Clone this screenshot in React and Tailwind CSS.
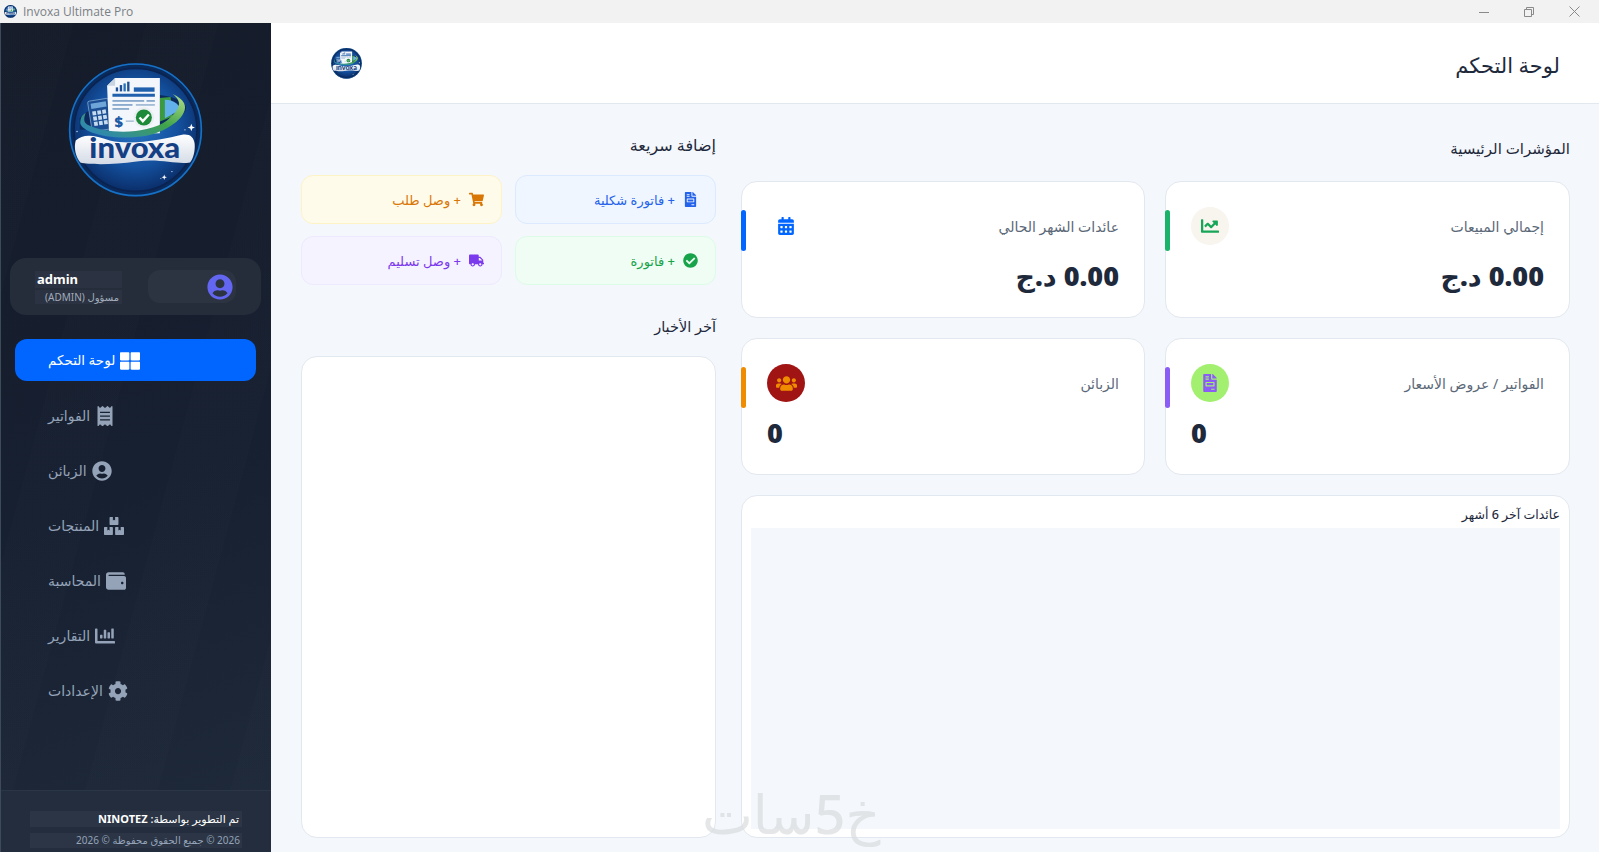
import React from "react";
import {
  FaThLarge, FaReceipt, FaUserCircle, FaBoxes, FaWallet, FaChartBar, FaCog,
  FaFileInvoice, FaShoppingCart, FaCheckCircle, FaTruck, FaChartLine, FaCalendarAlt, FaUsers,
} from "react-icons/fa";

function Logo({ size }) {
  return (
    <svg width={size} height={size} viewBox="55 40 404 404" className="block shrink-0">
      <defs>
        <radialGradient id="lg-bg" cx="50%" cy="45%" r="55%">
          <stop offset="0%" stopColor="#2a78c8" />
          <stop offset="65%" stopColor="#134f9c" />
          <stop offset="100%" stopColor="#0b2f6b" />
        </radialGradient>
        <linearGradient id="lg-green" x1="0" y1="1" x2="1" y2="0">
          <stop offset="0%" stopColor="#2a7fd0" />
          <stop offset="55%" stopColor="#3fa34a" />
          <stop offset="100%" stopColor="#b6e08a" />
        </linearGradient>
        <linearGradient id="lg-banner" x1="0" y1="0" x2="0" y2="1">
          <stop offset="0%" stopColor="#ffffff" />
          <stop offset="100%" stopColor="#d4dbe6" />
        </linearGradient>
      </defs>
      <circle cx="257" cy="240" r="200" fill="#0a2a5c" />
      <circle cx="257" cy="240" r="197" fill="none" stroke="#1670c4" strokeWidth="5" />
      <circle cx="257" cy="240" r="184" fill="url(#lg-bg)" stroke="#0a2350" strokeWidth="5" />
      <path d="M90 205 C160 130 350 110 405 165 C420 185 380 215 330 235 L90 240 Z" fill="#0c2a5e" />
      <g transform="rotate(-9 148 195)">
        <rect x="120" y="150" width="62" height="92" rx="5" fill="#1b4e93" stroke="#8fb4dc" strokeWidth="2" />
        <rect x="128" y="158" width="46" height="16" fill="#6fa6da" />
        {[0, 1, 2].map((r) =>
          [0, 1, 2].map((c) => (
            <rect key={`${r}-${c}`} x={129 + c * 15} y={182 + r * 16} width="11" height="12" fill="#c8dcf0" />
          ))
        )}
      </g>
      <path d="M330 145 L362 142 L368 200 L330 215 Z" fill="#3b9a40" />
      <path d="M345 150 C375 150 392 170 392 180 L345 205 Z" fill="#62b1ea" />
      <path d="M172 108 L196 85 L330 85 L330 250 L178 255 Z" fill="#f3f6fa" />
      <path d="M172 108 L196 108 L196 85 Z" fill="#c9d4e2" />
      <rect x="198" y="113" width="7" height="12" fill="#1d4f96" />
      <rect x="210" y="106" width="7" height="19" fill="#1d4f96" />
      <rect x="221" y="101" width="7" height="24" fill="#2a70b8" />
      <rect x="232" y="96" width="7" height="29" fill="#1d4f96" />
      <rect x="252" y="113" width="62" height="13" fill="#2160ad" />
      <rect x="188" y="132" width="127" height="9" fill="#2160ad" />
      <rect x="188" y="151" width="95" height="5" fill="#7fa3c8" />
      <rect x="290" y="151" width="25" height="5" fill="#7fa3c8" />
      <rect x="188" y="163" width="60" height="5" fill="#7fa3c8" />
      <rect x="258" y="163" width="57" height="5" fill="#9db7d2" />
      <rect x="188" y="175" width="50" height="5" fill="#7fa3c8" />
      <text x="194" y="232" fontFamily="'Open Sans', sans-serif" fontWeight="800" fontSize="44" fill="#1d5aa6">$</text>
      <rect x="228" y="212" width="24" height="4" fill="#9db7d2" />
      <path d="M92 214 C84 244 180 276 290 258 C360 243 420 195 402 160 C397 150 385 140 368 133 C396 155 396 175 350 213 C300 250 180 258 112 224 C104 218 100 210 108 190 C96 196 94 204 92 214 Z" fill="url(#lg-green)" />
      <circle cx="282" cy="203" r="31" fill="#e9eef2" />
      <circle cx="282" cy="203" r="24" fill="#1c8a38" />
      <path d="M269 203 L279 214 L297 194" fill="none" stroke="#fff" strokeWidth="7" />
      <path d="M78 272 C100 252 130 254 180 272 C250 288 340 268 400 254 C420 252 432 262 434 282 C436 302 430 328 420 338 C380 345 330 325 260 335 C190 345 120 345 92 338 C78 320 72 295 78 272 Z" fill="url(#lg-banner)" />
      <text x="255" y="324" textAnchor="middle" textLength="272" lengthAdjust="spacingAndGlyphs" fontFamily="Lato, sans-serif" fontWeight="900" fontSize="84" fill="#153f85">invoxa</text>
      <path d="M424 222 L427 230 L435 233 L427 236 L424 244 L421 236 L413 233 L421 230 Z" fill="#fff" />
      <path d="M343 374 L345 380 L351 382 L345 384 L343 390 L341 384 L335 382 L341 380 Z" fill="#fff" />
      <circle cx="366" cy="365" r="2" fill="#dbe9f7" />
      <circle cx="333" cy="386" r="1.5" fill="#dbe9f7" />
      <circle cx="405" cy="240" r="2" fill="#dbe9f7" />
      <circle cx="82" cy="245" r="2" fill="#dbe9f7" />
    </svg>
  );
}

const nav = [
  { label: "لوحة التحكم", Icon: FaThLarge, active: true },
  { label: "الفواتير", Icon: FaReceipt },
  { label: "الزبائن", Icon: FaUserCircle },
  { label: "المنتجات", Icon: FaBoxes },
  { label: "المحاسبة", Icon: FaWallet },
  { label: "التقارير", Icon: FaChartBar },
  { label: "الإعدادات", Icon: FaCog },
];

function Sidebar() {
  return (
    <aside className="w-[271px] shrink-0 flex flex-col border-l border-l-[#3d4a5a] bg-[repeating-linear-gradient(105deg,rgba(255,255,255,0.008)_0px,rgba(255,255,255,0.008)_70px,rgba(0,0,0,0)_70px,rgba(0,0,0,0)_140px),linear-gradient(160deg,#151b29_0%,#172031_55%,#1f2a3b_100%)]">
      <div className="h-[235px] shrink-0 flex justify-center pt-[40px] pr-[1px]">
        <Logo size={135} />
      </div>
      <div className="ml-[9px] mr-[10px] h-[57px] rounded-[16px] bg-[#252d3b] flex items-center justify-between pl-[25px] pr-[25px]" dir="rtl">
        <div className="w-[88px] h-[33px] rounded-[12px] bg-[#2c3441] flex items-center pr-[3px]">
          <FaUserCircle className="text-[26px] text-[#6366f1]" />
        </div>
        <div className="w-[87px] flex flex-col gap-[2px] pt-[1px]">
          <div dir="ltr" className="h-[17px] bg-[#2b3342] pl-[2px] text-[13px] font-bold leading-[17px] text-white">admin</div>
          <div className="h-[14px] bg-[#2b3342] pr-[3px] text-[10px] leading-[14px] text-[#a2acba] whitespace-nowrap">مسؤول (ADMIN)</div>
        </div>
      </div>
      <nav className="mt-[24px] pl-[14px] pr-[15px] flex flex-col gap-[13px]">
        {nav.map(({ label, Icon, active }) => (
          <div
            key={label}
            dir="rtl"
            className={`h-[42px] rounded-[12px] flex items-center justify-end gap-[5px] pl-[33px] ${active ? "bg-[#0066ff] text-white font-medium" : "text-[#94a3b8]"}`}
          >
            <Icon className="text-[20px] shrink-0 mt-[2px]" />
            <span className={`${active ? "text-[13.5px]" : "text-[14px]"} leading-none pt-[2px]`}>{label}</span>
          </div>
        ))}
      </nav>
      <div className="mt-auto h-[62px] border-t border-t-[#2a3546] bg-[#232d3d] pt-[20px] px-[29px]">
        <div dir="rtl" className="h-[16px] bg-[#2b3545] px-[3px] text-[11px] font-medium leading-[16px] text-white whitespace-nowrap">
          تم التطوير بواسطة: <b>NINOTEZ</b>
        </div>
        <div dir="rtl" className="mt-[6px] h-[15px] bg-[#2b3545] px-[2px] text-[10px] leading-[15px] text-[#94a3b8] whitespace-nowrap">
          2026 © جميع الحقوق محفوظة © 2026
        </div>
      </div>
    </aside>
  );
}

function StatCard({ label, value, Icon, bar, iconBg, iconColor, ltr, iconSize = "text-[18px]" }) {
  return (
    <div className="relative h-[137px] rounded-[16px] border border-[#e2e8f0] bg-white pt-[25px] pl-[25px] pr-[25px]">
      <span className={`absolute left-[-1px] top-[28px] h-[41px] w-[5px] rounded-[3px] ${bar}`} />
      <div className="flex items-center justify-between h-[38px]">
        <span className="text-[14px] pt-[1px] text-[#5b6878]">{label}</span>
        <span className={`h-[38px] w-[38px] rounded-full flex items-center justify-center ${iconBg} ${iconColor}`}>
          <Icon className={iconSize} />
        </span>
      </div>
      <div dir={ltr ? "ltr" : "rtl"} className="mt-[13px] text-[27px] font-black leading-[36px] text-[#1e293b]">{value}</div>
    </div>
  );
}

function Quick({ label, Icon, cls }) {
  return (
    <div className={`h-[49px] rounded-[12px] border flex items-center gap-[8px] pr-[17px] ${cls}`}>
      <Icon className="text-[15px] shrink-0" />
      <span className="text-[13px] font-medium pt-[2px] whitespace-nowrap">+&nbsp;{label}</span>
    </div>
  );
}

export default function App() {
  return (
    <div className="h-screen w-full overflow-hidden flex flex-col bg-[#f4f7fb] font-['Noto_Sans','DejaVu_Sans',sans-serif]">
      <div className="h-[23px] shrink-0 bg-[#f2f2f2] flex items-center pl-[4px]">
        <Logo size={13} />
        <span className="ml-[6px] text-[12px] text-[#7a7f85] font-['Open_Sans',sans-serif]">Invoxa Ultimate Pro</span>
        <div className="ml-auto flex items-center gap-[35px] pr-[19px] text-[#8a8a8a]">
          <svg width="10" height="10" viewBox="0 0 10 10"><path d="M0 5.5h10" stroke="currentColor" /></svg>
          <svg width="10" height="10" viewBox="0 0 10 10" fill="none"><path d="M.5 2.5h7v7h-7zM2.5 2.5v-2h7v7h-2" stroke="currentColor" /></svg>
          <svg width="11" height="11" viewBox="0 0 11 11"><path d="M.5.5l10 10M10.5.5l-10 10" stroke="currentColor" /></svg>
        </div>
      </div>
      <div className="flex-1 min-h-0 flex">
        <Sidebar />
        <div className="flex-1 min-w-0 flex flex-col relative">
          <header dir="rtl" className="h-[81px] shrink-0 bg-white border-b border-b-[#e2e8f0] flex items-center justify-between pr-[39px] pl-[60px]">
            <h1 className="text-[21px] font-medium pt-[5px] text-[#1e293b]">لوحة التحكم</h1>
            <Logo size={31} />
          </header>
          <main dir="rtl" className="flex-1 min-h-0 grid grid-cols-[829px_415px] gap-[25px] pr-[29px] pl-[30px]">
            <section className="flex flex-col pt-[29px] pb-[14px]">
              <h2 className="h-[30px] text-[15px] font-medium leading-[30px] text-[#1e293b]">المؤشرات الرئيسية</h2>
              <div className="mt-[18px] grid grid-cols-[405px_404px] gap-x-[20px] gap-y-[20px]">
                <StatCard label="إجمالي المبيعات" value="0.00 د.ج" Icon={FaChartLine} bar="bg-[#1bb36a]" iconBg="bg-[#f8f4ee]" iconColor="text-[#17a558]" />
                <StatCard label="عائدات الشهر الحالي" value="0.00 د.ج" Icon={FaCalendarAlt} bar="bg-[#0066ff]" iconBg="bg-white" iconColor="text-[#0066ff]" />
                <StatCard label="الفواتير / عروض الأسعار" value="0" ltr Icon={FaFileInvoice} bar="bg-[#8b5cf6]" iconBg="bg-[#a3f070]" iconColor="text-[#8b5cf6]" />
                <StatCard label="الزبائن" value="0" ltr Icon={FaUsers} iconSize="text-[21px]" bar="bg-[#f08c00]" iconBg="bg-[#a01414]" iconColor="text-[#f08c00]" />
              </div>
              <div className="mt-[20px] flex-1 min-h-0 rounded-[16px] border border-[#e2e8f0] bg-white px-[9px] pb-[8px] flex flex-col">
                <h3 className="h-[32px] text-[12.5px] font-medium leading-[37px] text-[#1e293b]">عائدات آخر 6 أشهر</h3>
                <div className="flex-1 bg-[#f4f7fb]" />
              </div>
            </section>
            <section className="flex flex-col pt-[26px] pb-[14px]">
              <h2 className="h-[30px] text-[16px] font-medium leading-[30px] text-[#1e293b]">إضافة سريعة</h2>
              <div className="mt-[15px] grid grid-cols-2 gap-x-[13px] gap-y-[12px]">
                <Quick label="فاتورة شكلية" Icon={FaFileInvoice} cls="bg-[#eff6ff] border-[#dbeafe] text-[#2563eb]" />
                <Quick label="وصل طلب" Icon={FaShoppingCart} cls="bg-[#fffbeb] border-[#fef3c7] text-[#d97706]" />
                <Quick label="فاتورة" Icon={FaCheckCircle} cls="bg-[#f0fdf4] border-[#dcfce7] text-[#16a34a]" />
                <Quick label="وصل تسليم" Icon={FaTruck} cls="bg-[#f5f3ff] border-[#ede9fe] text-[#7c3aed]" />
              </div>
              <h2 className="mt-[26px] h-[30px] text-[14.5px] font-medium leading-[30px] text-[#1e293b]">آخر الأخبار</h2>
              <div className="mt-[15px] flex-1 min-h-0 rounded-[16px] border border-[#e2e8f0] bg-white" />
            </section>
          </main>
          <span dir="rtl" className="absolute left-[431px] bottom-[6px] text-[54px] leading-[66px] font-medium text-[#d9dcdf] opacity-70 pointer-events-none">خ5سات</span>
        </div>
      </div>
    </div>
  );
}
